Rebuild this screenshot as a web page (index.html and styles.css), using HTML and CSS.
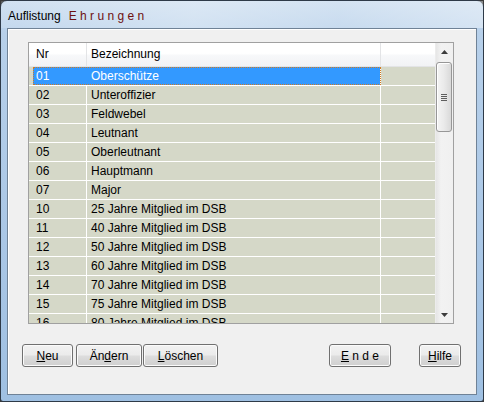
FILE: index.html
```html
<!DOCTYPE html>
<html lang="de">
<head>
<meta charset="utf-8">
<link rel="stylesheet" href="styles.css">
</head>
<body>
<div class="window">
  <div class="titlebar"><span class="t-main">Auflistung</span><span class="t-red">E h r u n g e n</span></div>
  <div class="client">
    <div class="grid">
      <div class="table">
        <div class="row head"><div class="c1">Nr</div><div class="c2">Bezeichnung</div><div class="c3"></div></div>
        <div class="row sel"><div class="selbox"><div class="c1">01</div><div class="c2">Oberschütze</div></div><div class="c3"></div></div>
        <div class="row"><div class="c1">02</div><div class="c2">Unteroffizier</div><div class="c3"></div></div>
        <div class="row"><div class="c1">03</div><div class="c2">Feldwebel</div><div class="c3"></div></div>
        <div class="row"><div class="c1">04</div><div class="c2">Leutnant</div><div class="c3"></div></div>
        <div class="row"><div class="c1">05</div><div class="c2">Oberleutnant</div><div class="c3"></div></div>
        <div class="row"><div class="c1">06</div><div class="c2">Hauptmann</div><div class="c3"></div></div>
        <div class="row"><div class="c1">07</div><div class="c2">Major</div><div class="c3"></div></div>
        <div class="row"><div class="c1">10</div><div class="c2">25 Jahre Mitglied im DSB</div><div class="c3"></div></div>
        <div class="row"><div class="c1">11</div><div class="c2">40 Jahre Mitglied im DSB</div><div class="c3"></div></div>
        <div class="row"><div class="c1">12</div><div class="c2">50 Jahre Mitglied im DSB</div><div class="c3"></div></div>
        <div class="row"><div class="c1">13</div><div class="c2">60 Jahre Mitglied im DSB</div><div class="c3"></div></div>
        <div class="row"><div class="c1">14</div><div class="c2">70 Jahre Mitglied im DSB</div><div class="c3"></div></div>
        <div class="row"><div class="c1">15</div><div class="c2">75 Jahre Mitglied im DSB</div><div class="c3"></div></div>
        <div class="row"><div class="c1">16</div><div class="c2">80 Jahre Mitglied im DSB</div><div class="c3"></div></div>
      </div>
      <div class="scrollbar">
        <div class="sb-btn"><svg width="7" height="4" viewBox="0 0 7 4"><path d="M3.5 0 L7 4 L0 4 Z" fill="#3c3c3c"/></svg></div>
        <div class="sb-track">
          <div class="thumb"><div class="grip"><i></i><i></i><i></i><i></i></div></div>
        </div>
        <div class="sb-btn"><svg width="7" height="4" viewBox="0 0 7 4"><path d="M0 0 L7 0 L3.5 4 Z" fill="#3c3c3c"/></svg></div>
      </div>
    </div>
    <div class="buttons">
      <button class="btn b-neu"><u>N</u>eu</button>
      <button class="btn b-aendern">Än<u>d</u>ern</button>
      <button class="btn b-loeschen"><u>L</u>öschen</button>
      <button class="btn b-ende"><u>E</u> n d e</button>
      <button class="btn b-hilfe"><u>H</u>ilfe</button>
    </div>
  </div>
</div>
</body>
</html>
```
FILE: styles.css
```css
* { box-sizing: border-box; }
html, body { margin: 0; padding: 0; }
body {
  width: 484px; height: 402px; overflow: hidden;
  background: #3b3b3b;
  font-family: "Liberation Sans", Arial, sans-serif;
  font-size: 12px;
}
.window {
  width: 484px; height: 402px;
  border: 1px solid #2e3a48;
  border-radius: 7px 7px 3px 3px;
  background: linear-gradient(180deg, #c9dcef 0%, #b7d0ea 8%, #aac7e6 60%, #9fc0e2 100%);
  padding: 0 6px 6px 6px;
  display: flex; flex-direction: column;
}
.titlebar {
  height: 27px;
  display: flex; align-items: center;
  padding: 2px 0 0 1px;
  font-size: 12px;
  color: #000;
  background: linear-gradient(90deg, rgba(255,255,255,0.15), rgba(255,255,255,0.35) 40%, rgba(255,255,255,0.2) 70%, rgba(255,255,255,0.4));
  margin: 0 -6px; padding-left: 7px;
}
.t-main { margin-right: 8px; }
.t-red { color: #6e1010; }
.client {
  flex: 1;
  background: #f0f0f0;
  border: 1px solid #6f8296;
  box-shadow: inset 1px 1px 0 #ffffff;
  display: flex; flex-direction: column;
  padding: 13px 0 0 20px;
}
.grid {
  width: 426px; height: 282px;
  border: 1px solid #a0a0a0;
  display: flex;
  background: #d5d8c8;
}
.table {
  width: 406px;
  overflow: hidden;
  display: flex; flex-direction: column;
}
.row {
  display: flex;
  height: 19px; flex: none;
  border-bottom: 1px solid #ffffff;
  line-height: 18px;
}
.row > div, .selbox > div { white-space: nowrap; overflow: hidden; }
.c1 { width: 58px; border-right: 1px solid #fff; padding-left: 7px; }
.c2 { width: 294px; border-right: 1px solid #fff; padding-left: 4px; }
.c3 { width: 54px; }
.head {
  height: 24px; line-height: 23px;
  background: linear-gradient(180deg, #ffffff 0%, #ffffff 45%, #f7f8fa 55%, #f2f3f5 100%);
  border-bottom: 1px solid #e3e4e6;
}
.head .c1, .head .c2 { border-right: 1px solid #e3e4e6; }
.sel .selbox {
  display: flex;
  background: #3399ff;
  color: #fff;
  margin-left: 4px;
  outline: 1px dotted #d07a20;
  outline-offset: -1px;
}
.sel .selbox .c1 { width: 54px; padding-left: 3px; border-right: 1px solid #3399ff; }
.sel .selbox .c2 { border-right: 1px solid #fff; }
.scrollbar {
  width: 18px;
  background: linear-gradient(90deg, #e6e6e6, #f2f2f2 30%, #f0f0f0);
  border-left: 1px solid #ececec;
  display: flex; flex-direction: column;
}
.sb-btn {
  height: 17px; flex: none;
  display: flex; align-items: center; justify-content: center;
}
.sb-track { flex: 1; padding: 2px 1px 0 0; }
.thumb {
  height: 70px;
  border: 1px solid #979797;
  border-radius: 3px;
  background: linear-gradient(90deg, #f4f4f4 0%, #eaeaea 50%, #d9d9d9 100%);
  box-shadow: inset 1px 1px 0 #fff;
  display: flex; align-items: center; justify-content: center;
}
.grip { display: flex; flex-direction: column; gap: 1px; }
.grip i { display: block; width: 6px; height: 1px; background: #5e5e5e; }
.buttons {
  display: flex;
  margin-top: 20px;
  margin-left: -6px;
}
.btn {
  height: 23px;
  font-family: "Liberation Sans", Arial, sans-serif;
  font-size: 12px;
  color: #000;
  border: 1px solid #707070;
  border-radius: 3px;
  background: linear-gradient(180deg, #f2f2f2 0%, #ebebeb 48%, #dddddd 52%, #cfcfcf 100%);
  box-shadow: inset 0 0 0 1px #fbfbfb;
  padding: 0;
  margin: 0;
}
.b-neu { width: 51px; }
.b-aendern { width: 66px; margin-left: 3px; }
.b-loeschen { width: 75px; margin-left: 1px; }
.b-ende { width: 62px; margin-left: 111px; }
.b-hilfe { width: 42px; margin-left: 28px; }
```
